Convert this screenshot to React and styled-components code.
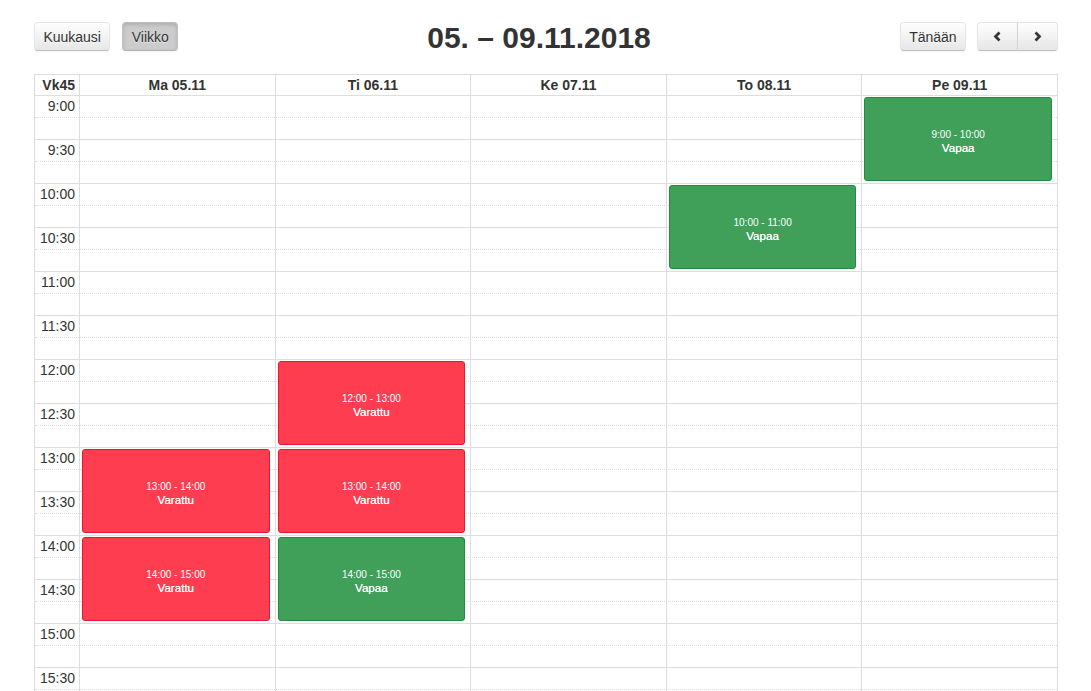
import styled, { createGlobalStyle, css } from "styled-components"

const GlobalStyle = createGlobalStyle`
  html, body {
    margin: 0;
    padding: 0;
    background: #fff;
    overflow: hidden;
  }
  body {
    font-family: "Liberation Sans", Arial, Helvetica, sans-serif;
    font-size: 14px;
    color: #333;
  }
`

const START_HOUR = 9
const SLOT_COUNT = 32 // 15 min slots, 9:00 - 17:00

const days = [
  {
    label: "Ma 05.11",
    events: [
      { start: 13, end: 14, free: false },
      { start: 14, end: 15, free: false },
    ],
  },
  {
    label: "Ti 06.11",
    events: [
      { start: 12, end: 13, free: false },
      { start: 13, end: 14, free: false },
      { start: 14, end: 15, free: true },
    ],
  },
  { label: "Ke 07.11", events: [] },
  { label: "To 08.11", events: [{ start: 10, end: 11, free: true }] },
  { label: "Pe 09.11", events: [{ start: 9, end: 10, free: true }] },
]

const rowOf = (hour) => (hour - START_HOUR) * 4 + 1
const fmt = (hour) => `${hour}:00`

function Chevron({ dir }) {
  const points = dir === "left" ? "6.5,1.5 2.5,5.5 6.5,9.5" : "2.5,1.5 6.5,5.5 2.5,9.5"
  return (
    <svg width="9" height="11" viewBox="0 0 9 11">
      <polyline points={points} fill="none" stroke="#333" strokeWidth="2.7" />
    </svg>
  )
}

export default function App() {
  const slots = Array.from({ length: SLOT_COUNT }, (_, i) => i)

  return (
    <Page>
      <GlobalStyle />
      <Toolbar>
        <LeftGroup>
          <Button>Kuukausi</Button>
          <Button $active>Viikko</Button>
        </LeftGroup>
        <Center>
          <Title>05. – 09.11.2018</Title>
        </Center>
        <RightGroup>
          <Button>Tänään</Button>
          <ButtonGroup>
            <Button $icon $first><Chevron dir="left" /></Button>
            <Button $icon $last><Chevron dir="right" /></Button>
          </ButtonGroup>
        </RightGroup>
      </Toolbar>

      <Calendar>
        <HeaderRow>
          <AxisHead>Vk45</AxisHead>
          {days.map((d) => (
            <DayHead key={d.label}>{d.label}</DayHead>
          ))}
        </HeaderRow>

        <Body>
          {slots.map((i) => (
            <SlotRow key={i} $row={i + 1} $major={i % 2 === 1}>
              {i % 2 === 0 && (
                <TimeLabel>
                  {START_HOUR + Math.floor(i / 4)}:{i % 4 === 0 ? "00" : "30"}
                </TimeLabel>
              )}
            </SlotRow>
          ))}
          {days.map((d, c) => (
            <DayColumn key={d.label} $col={c + 2} />
          ))}
          {days.map((d, c) =>
            d.events.map((e) => (
              <Event
                key={d.label + e.start}
                $free={e.free}
                $col={c + 2}
                $from={rowOf(e.start)}
                $to={rowOf(e.end)}
              >
                <EventTime>{fmt(e.start)} - {fmt(e.end)}</EventTime>
                <EventTitle>{e.free ? "Vapaa" : "Varattu"}</EventTitle>
              </Event>
            ))
          )}
        </Body>
      </Calendar>
    </Page>
  )
}

const Page = styled.div`
  padding: 22px 33px 0 34px;
`
const Toolbar = styled.div`
  display: flex;
  align-items: center;
  height: 29px;
  margin-bottom: 23px;
`
const LeftGroup = styled.div`
  display: flex;
  gap: 12px;
`
const Center = styled.div`
  flex: 1;
  display: flex;
  justify-content: center;
`
const RightGroup = styled.div`
  display: flex;
  gap: 11px;
`
const ButtonGroup = styled.div`
  display: flex;
`
const Title = styled.h2`
  margin: 0;
  font-size: 30px;
  font-weight: 700;
  color: #333;
  line-height: 29px;
  position: relative;
  top: 1px;
`
const Button = styled.button`
  box-sizing: border-box;
  height: 29px;
  padding: 0 8.4px;
  font-family: "Liberation Sans", Arial, sans-serif;
  font-size: 14px;
  color: #333;
  border: 1px solid #e6e6e6;
  border-color: #e6e6e6 #e6e6e6 #bfbfbf;
  border-radius: 4px;
  background: linear-gradient(to bottom, #ffffff, #e6e6e6);
  background-color: #f5f5f5;
  text-shadow: 0 1px 1px rgba(255, 255, 255, 0.75);
  box-shadow: inset 0 1px 0 rgba(255, 255, 255, 0.2), 0 1px 2px rgba(0, 0, 0, 0.05);
  display: flex;
  align-items: center;
  justify-content: center;
  cursor: pointer;

  ${(p) =>
    p.$active &&
    css`
      background: #cccccc;
      border-color: #bdbdbd #c4c4c4 #b0b0b0;
      box-shadow: inset 0 2px 4px rgba(0, 0, 0, 0.15), 0 1px 2px rgba(0, 0, 0, 0.05);
    `}
  ${(p) =>
    p.$icon &&
    css`
      width: 41px;
      padding: 0;
    `}
  ${(p) =>
    p.$first &&
    css`
      border-top-right-radius: 0;
      border-bottom-right-radius: 0;
    `}
  ${(p) =>
    p.$last &&
    css`
      border-top-left-radius: 0;
      border-bottom-left-radius: 0;
      border-left-color: #d4d4d4;
      margin-left: -1px;
    `}
`
const Calendar = styled.div`
  border: 1px solid #ddd;
  border-bottom: none;
`
const HeaderRow = styled.div`
  display: grid;
  grid-template-columns: 44px repeat(5, 1fr);
  height: 20px;
  border-bottom: 1px solid #ddd;
  font-weight: 700;
  line-height: 20px;
`
const AxisHead = styled.div`
  text-align: right;
  padding-right: 4px;
`
const DayHead = styled.div`
  text-align: center;
  border-left: 1px solid #ddd;
`
const Body = styled.div`
  display: grid;
  grid-template-columns: 44px repeat(5, 1fr);
  grid-template-rows: repeat(${SLOT_COUNT}, 22px);
`
const SlotRow = styled.div`
  box-sizing: border-box;
  grid-column: 1 / -1;
  grid-row: ${(p) => p.$row};
  border-bottom: 1px ${(p) => (p.$major ? "solid" : "dotted")} #ddd;
  display: grid;
  grid-template-columns: 44px 1fr;
`
const TimeLabel = styled.div`
  text-align: right;
  padding-right: 4px;
  line-height: 16px;
  margin-top: 2px;
`
const DayColumn = styled.div`
  grid-column: ${(p) => p.$col};
  grid-row: 1 / -1;
  border-left: 1px solid #ddd;
  margin-top: -1px;
`
const Event = styled.div`
  grid-column: ${(p) => p.$col};
  grid-row: ${(p) => p.$from} / ${(p) => p.$to};
  margin: 1px 5px 3px 3px;
  z-index: 1;
  border-radius: 3px;
  border: 1px solid ${(p) => (p.$free ? "#1f8d3b" : "#e8152d")};
  background: ${(p) => (p.$free ? "#40a05a" : "#ff3d51")};
  color: #fff;
  display: flex;
  flex-direction: column;
  align-items: center;
  justify-content: center;
  padding-top: 5px;
`
const EventTime = styled.div`
  font-size: 10px;
  line-height: 13px;
`
const EventTitle = styled.div`
  font-size: 11.6px;
  line-height: 14px;
  text-shadow: 0 0 0.4px #fff;
`
